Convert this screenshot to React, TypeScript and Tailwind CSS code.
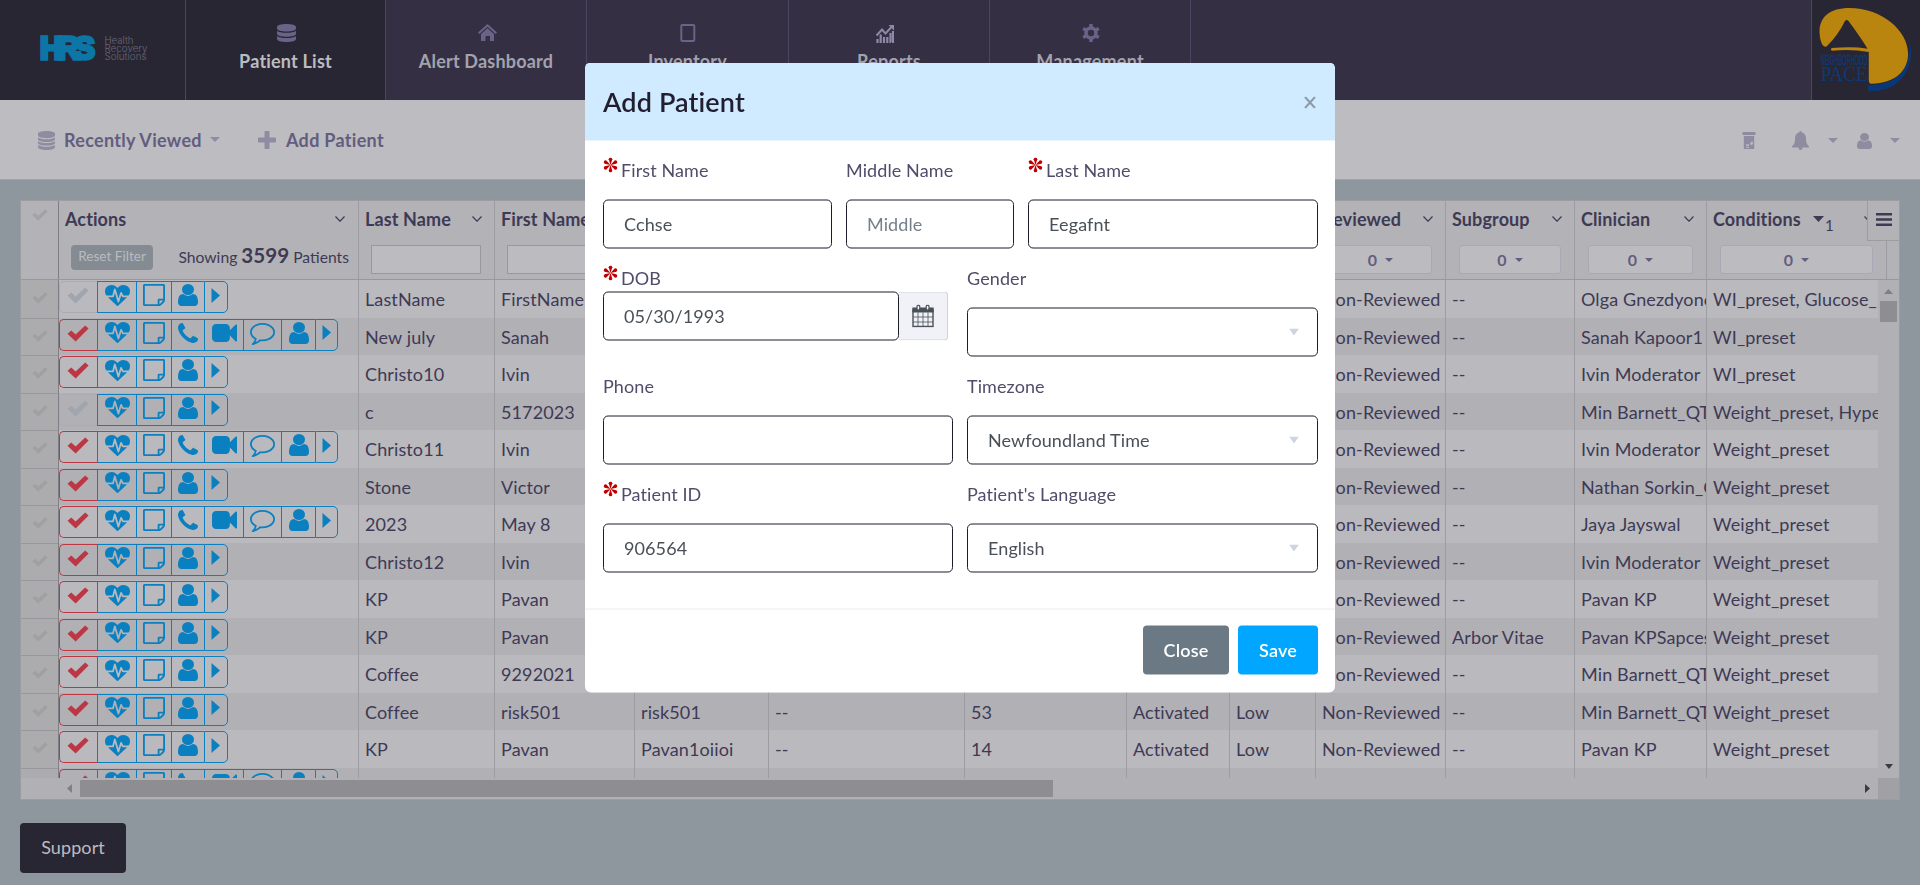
import type { ReactNode } from "react";

const P = {
  heart:
    "M1280 896h305q-5 6-10 10.5t-9 7.5l-3 4-623 600q-18 18-44 18t-44-18l-624-602q-5-2-21-20h369q22 0 39.5-13.5t22.5-34.5l70-281 190 667q6 20 23 33t39 13q21 0 38-13t23-33l146-485 56 112q18 35 57 35zm512-428q0 145-103 300h-369l-111-221q-8-17-25.5-27t-36.5-8q-45 5-56 46l-129 430-196-686q-6-20-23.5-33t-39.5-13-39 13.5-22 34.5l-116 464h-423q-103-155-103-300 0-220 127-344t351-124q62 0 126.5 21.5t120 58 95.5 68.5 76 68q36-36 76-68t95.5-68.5 120-58 126.5-21.5q224 0 351 124t127 344z",
  note: "M1528 1280h-248v248q29-10 41-22l185-185q12-12 22-41zm-280-128h288v-896h-1280v1280h896v-288q0-40 28-68t68-28zm416-928v1024q0 40-20 88t-48 76l-184 184q-28 28-76 48t-88 20h-1024q-40 0-68-28t-28-68v-1344q0-40 28-68t68-28h1344q40 0 68 28t28 68z",
  phone:
    "M1600 1240q0 27-10 70.5t-21 68.5q-21 50-122 106-94 51-186 51-27 0-53-3.5t-57.5-12.5-47-14.5-55.5-20.5-49-18q-98-35-175-83-127-79-264-216t-216-264q-48-77-83-175-3-9-18-49t-20.5-55.5-14.5-47-12.5-57.5-3.5-53q0-92 51-186 56-101 106-122 25-11 68.5-21t70.5-10q14 0 21 3 18 6 53 76 11 19 30 54t35 63.5 31 53.5q3 4 17.5 25t21.5 35.5 7 28.5q0 20-28.5 50t-62 55-62 53-28.5 46q0 9 5 22.5t8.5 20.5 14 24 11.5 19q76 137 174 235t235 174q2 1 19 11.5t24 14 20.5 8.5 22.5 5q18 0 46-28.5t53-62 55-62 50-28.5q14 0 28.5 7t35.5 21.5 25 17.5q25 15 53.5 31t63.5 35 54 30q70 35 76 53 3 7 3 21z",
  video:
    "M1792 352v1088q0 42-39 59-13 5-25 5-27 0-45-19l-403-403v166q0 119-84.5 203.5t-203.5 84.5h-704q-119 0-203.5-84.5t-84.5-203.5v-704q0-119 84.5-203.5t203.5-84.5h704q119 0 203.5 84.5t84.5 203.5v165l403-402q18-19 45-19 12 0 25 5 39 17 39 59z",
  comment:
    "M896 384q-204 0-381.5 69.5t-282 187.5-104.5 255q0 112 71.5 213.5t201.5 175.5l87 50-27 96q-24 91-70 172 152-63 275-171l43-38 57 6q69 8 130 8 204 0 381.5-69.5t282-187.5 104.5-255-104.5-255-282-187.5-381.5-69.5zm896 512q0 174-120 321.5t-326 233-450 85.5q-70 0-145-8-198 175-460 242-49 14-114 22h-5q-15 0-27-10.5t-16-27.5v-1q-3-4-.5-12t2-10 4.5-9.5l6-9 7-8.5 8-9q7-8 31-34.5t34.5-38 31-39.5 32.5-51 27-59 26-76q-157-89-247.5-220t-90.5-281q0-174 120-321.5t326-233 450-85.5 450 85.5 326 233 120 321.5z",
  user: "M1536 1399q0 109-62.5 187t-150.5 78h-854q-88 0-150.5-78t-62.5-187q0-85 8.5-160.5t31.5-152 58.5-131 94-89 134.5-34.5q131 128 313 128t313-128q76 0 134.5 34.5t94 89 58.5 131 31.5 152 8.5 160.5zm-256-887q0 159-112.5 271.5t-271.5 112.5-271.5-112.5-112.5-271.5 112.5-271.5 271.5-112.5 271.5 112.5 112.5 271.5z",
};

function Glyph({ d, box, className }: { d: string; box: string; className: string }) {
  return (
    <svg viewBox={box} preserveAspectRatio="none" fill="currentColor" className={`shrink-0 ${className}`}>
      <path d={d} />
    </svg>
  );
}

function Check({ className }: { className: string }) {
  return <Glyph className={className} box="0 0 22 17" d="M18.2.4l3.4 3.2L8.6 16.6.5 8.8l3.8-3.4 4.3 4.2z" />;
}

function Caret({ className = "w-[10px] h-[5px]" }: { className?: string }) {
  return <Glyph className={className} box="0 0 10 5" d="M0 0h10l-5 5z" />;
}

function Chevron() {
  return (
    <svg viewBox="0 0 10 6" fill="none" stroke="currentColor" strokeWidth="1.2" className="h-[6px] w-[10px] shrink-0">
      <path d="M.5.5L5 5.2 9.500.5" />
    </svg>
  );
}

function Database({ layers, className }: { layers: 3 | 4; className: string }) {
  return layers === 3 ? (
    <Glyph
      className={className}
      box="0 0 19 18"
      d="M9.500 0C15 0 19 1.300 19 3v1.500C19 6.200 15 7.500 9.500 7.500S0 6.200 0 4.500V3C0 1.300 4 0 9.500 0zM0 6.700c1.600 1.400 5 2.100 9.500 2.100s7.900-.7 9.500-2.100v3c0 1.700-4 3-9.500 3S0 11.400 0 9.700zM0 12c1.600 1.400 5 2.100 9.500 2.100S17.400 13.400 19 12v3c0 1.700-4 3-9.500 3S0 16.700 0 15z"
    />
  ) : (
    <Glyph
      className={className}
      box="0 0 17 19"
      d="M8.500 0C13.500 0 17 1.200 17 2.600v2C17 6 13.500 7.200 8.500 7.200S0 6 0 4.600v-2C0 1.200 3.500 0 8.500 0zM0 6.500c1.500 1.200 4.500 1.800 8.500 1.800s7-.6 8.500-1.800v1.700c0 1.500-3.500 2.700-8.500 2.700S0 9.700 0 8.200zM0 10.200C1.500 11.400 4.500 12 8.500 12s7-.6 8.500-1.800v1.700c0 1.500-3.500 2.700-8.500 2.700S0 13.400 0 11.900zM0 14c1.500 1.200 4.500 1.800 8.500 1.800s7-.6 8.500-1.800v2c0 1.700-3.500 3-8.500 3S0 17.700 0 16z"
    />
  );
}

function NavItem({ label, icon, className }: { label: string; icon: ReactNode; className: string }) {
  return (
    <div className={`flex h-full flex-col items-center border-r border-[#4a4560] pt-[23px] ${className}`}>
      <div className="flex h-[19px] items-center text-[#6a6387]">{icon}</div>
      <div className="mt-[6px] text-[18px] leading-[27px] font-bold tracking-[0.2px]">{label}</div>
    </div>
  );
}

function Header() {
  return (
    <header className="flex h-[100px] bg-[#342f43] text-[#a2a3ae]">
      <div className="flex h-full w-[186px] items-center border-r border-[#4a4560] bg-[#292634] pl-[39px]">
        <svg viewBox="0 0 112 40" className="mt-[-4px] h-[40px] w-[112px]">
          <g fontSize="31" fontWeight="700" fill="#0c76a6" stroke="#0c76a6" strokeWidth="3.400" className="font-['Liberation_Sans',sans-serif]">
            <text x="1" y="30.500" textLength="55" lengthAdjust="spacing">HRS</text>
          </g>
          <g fill="#6a6774" fontSize="10" className="font-['Inter',sans-serif] font-light">
            <text x="65.500" y="15.500" textLength="29" lengthAdjust="spacingAndGlyphs">Health</text>
            <text x="65.500" y="24" textLength="43" lengthAdjust="spacingAndGlyphs">Recovery</text>
            <text x="65.500" y="32" textLength="42" lengthAdjust="spacingAndGlyphs">Solutions</text>
          </g>
        </svg>
      </div>
      <NavItem label="Patient List" className="w-[200px] bg-[#292634] text-[#bcbcc0]" icon={<Database layers={3} className="ml-[2px] h-[18px] w-[19px]" />} />
      <NavItem
        label="Alert Dashboard"
        className="w-[201px]"
        icon={<Glyph className="ml-[2px] h-[17px] w-[19px]" box="0 0 19 17" d="M9.500 0L19 8.500l-1.400 1.400L9.500 2.800 1.400 9.900 0 8.500zM9.500 4.300L16 10v7h-4v-5H7.500v5H3v-7z" />}
      />
      <NavItem
        label="Inventory"
        className="w-[202px]"
        icon={<svg viewBox="0 0 16 18" className="h-[18px] w-[16px]" fill="none" stroke="currentColor" strokeWidth="2"><rect x="1.300" y="1" width="13" height="16" rx="1" /></svg>}
      />
      <NavItem
        label="Reports"
        className="w-[201px]"
        icon={
          <svg viewBox="0 0 18 18" className="mt-[2px] mr-[8px] h-[18px] w-[18px] text-[#8f89a8]" fill="none" stroke="currentColor" strokeWidth="2">
            <path d="M.5 10.500L6 4.500l3.500 4 6-6.500" />
            <path d="M12.500 0H18v5.500z" fill="currentColor" stroke="none" />
            <path d="M1.500 18v-4M4.700 18V9.500M8 18v-6M11.300 18v-6M14.500 18V8M17 18V6" strokeWidth="2.200" />
          </svg>
        }
      />
      <NavItem
        label="Management"
        className="w-[201px]"
        icon={
          <svg viewBox="0 0 18 18" className="ml-[2px] h-[18px] w-[18px]" fill="none" stroke="currentColor">
            <circle cx="9" cy="9" r="5" strokeWidth="3.600" />
            <path d="M9 0v3M9 15v3M1.200 4.500l2.600 1.500M14.200 12l2.600 1.500M1.200 13.500L3.800 12M14.200 6l2.600-1.500" strokeWidth="3.400" />
          </svg>
        }
      />
      <div className="ml-auto h-full w-[109px] border-l border-[#4a4560] bg-[#292634]">
        <svg viewBox="1296 0 272 300" preserveAspectRatio="none" className="h-[100px] w-[108px]">
          <path fill="#083878" d="M1544 130C1556 205 1515 279 1440 273Q1434 264 1438 255C1508 258 1544 210 1544 130z" />
          <path fill="#b9850f" d="M1331 140C1320 142 1315 112 1315 95C1315 50 1342 24 1390 24C1470 24 1538 90 1538 162C1538 212 1504 252 1444 251Q1439 250 1439 240L1439 156Q1395 146 1346 152Q1341 148 1346 144Q1400 139 1436 146Q1416 108 1388 63Q1383 57 1379 63Q1362 105 1334 138Z" />
          <text x="1318" y="196" textLength="118" lengthAdjust="spacingAndGlyphs" fontSize="43" fill="#0a3a77" stroke="#0a3a77" strokeWidth="1" className="font-['Liberation_Sans',sans-serif]">NEIGHBORHOOD</text>
          <text x="1318" y="244" textLength="118" lengthAdjust="spacingAndGlyphs" fontSize="60" fill="#0a3a77" className="font-['Liberation_Serif',serif]">PACE</text>
        </svg>
      </div>
    </header>
  );
}

function Toolbar() {
  return (
    <div className="flex h-[80px] items-center border-b border-[#a2a3a9] bg-[#bdbcc0] pr-[20px] pl-[38px] text-[18px] font-bold tracking-[0.3px] text-[#635d80]">
      <Database layers={4} className="mt-[2px] h-[19px] w-[17px] text-[#8f8ba0]" />
      <span className="mt-[2px] ml-[9px] w-[138px] whitespace-nowrap">Recently Viewed</span>
      <Caret className="ml-[8px] h-[5px] w-[10px] text-[#8f8ba0]" />
      <Glyph className="mt-[1px] ml-[38px] h-[18px] w-[18px] text-[#8f8ba0]" box="0 0 18 18" d="M6.500 1q0-1 1-1h3q1 0 1 1v5.500H17q1 0 1 1v3q0 1-1 1h-5.500V17q0 1-1 1h-3q-1 0-1-1v-5.500H1q-1 0-1-1v-3q0-1 1-1h5.500z" />
      <span className="mt-[2px] ml-[10px]">Add Patient</span>
      <div className="mt-[2px] ml-auto flex items-center text-[#8f8ba0]">
        <svg viewBox="0 0 14 18" className="h-[17px] w-[14px]" fill="currentColor">
          <rect x="0" y="0" width="14" height="3.200" rx="1" />
          <path fillRule="evenodd" d="M1.500 4.300h11V18h-11zM4 13v1.500h3V13zM4 15.500v1.200h3v-1.200zM8.500 11l2-1 1 1.500-1.500 2.500-1.500-1z" />
        </svg>
        <Glyph className="ml-[36px] h-[19px] w-[17px]" box="0 0 17 19" d="M8.500 0q1.200 0 1.300 1.500C13 2.200 14 5 14 8c0 4 1 5.500 3 7.500v1h-6.500Q10.500 19 8.500 19t-2-2.500H0v-1C2 13.500 3 12 3 8c0-3 1-5.800 4.200-6.500Q7.300 0 8.500 0z" />
        <Caret className="ml-[19px] h-[5px] w-[10px]" />
        <Glyph className="ml-[19px] h-[16px] w-[15px]" box="256 128 1280 1536" d={P.user} />
        <Caret className="ml-[18px] h-[5px] w-[10px]" />
      </div>
    </div>
  );
}

const plain = "border-l border-y border-[#0a80c0] h-[32px] flex justify-center items-center pb-[4px] text-[#0a80c0]";

function Actions({ active, full }: { active: boolean; full: boolean }) {
  return (
    <div className="flex pt-[1px]">
      <div
        className={`flex h-[32px] w-[38px] items-center justify-center rounded-l-[5px] border-y border-l pr-px pb-[3px] ${active ? "border-[#bd3644] text-[#bd3644]" : "border-[#a9acb3] text-[#a1a5ae]"}`}
      >
        <Check className="h-[17px] w-[22px]" />
      </div>
      <div className={`${plain} w-[39px]`}><Glyph className="h-[21px] w-[25px]" box="0 0 1792 1536" d={P.heart} /></div>
      <div className={`${plain} w-[35px]`}><Glyph className="h-[22px] w-[22px]" box="128 128 1536 1536" d={P.note} /></div>
      {full && (
        <>
          <div className={`${plain} w-[33px]`}><Glyph className="h-[20px] w-[20px]" box="192 128 1408 1408" d={P.phone} /></div>
          <div className={`${plain} w-[39px]`}><Glyph className="h-[18px] w-[25px]" box="0 256 1792 1280" d={P.video} /></div>
          <div className={`${plain} w-[38px]`}><Glyph className="mt-[2px] h-[22px] w-[25px]" box="0 256 1792 1536" d={P.comment} /></div>
        </>
      )}
      <div className={`${plain} ${full ? "w-[34px]" : "w-[33px]"}`}><Glyph className="h-[22px] w-[20px]" box="256 128 1280 1536" d={P.user} /></div>
      <div className={`${plain} ${full ? "w-[23px]" : "w-[24px]"} rounded-r-[5px] border-r pr-[1px]`}><Glyph className="h-[15px] w-[9px]" box="0 0 9 16" d="M.5 0L9 8 .5 16z" /></div>
    </div>
  );
}

type Row = { active: boolean; full: boolean; cells: string[] };

const row = (flags: string, ...cells: string[]): Row => ({ active: flags.includes("a"), full: flags.includes("f"), cells });

const ROWS: Row[] = [
  row("", "LastName", "FirstName", "", "", "", "", "", "Non-Reviewed", "--", "Olga Gnezdyonova", "WI_preset, Glucose_preset"),
  row("af", "New july", "Sanah", "", "", "", "", "", "Non-Reviewed", "--", "Sanah Kapoor1", "WI_preset"),
  row("a", "Christo10", "Ivin", "", "", "", "", "", "Non-Reviewed", "--", "Ivin Moderator", "WI_preset"),
  row("", "c", "5172023", "", "", "", "", "", "Non-Reviewed", "--", "Min Barnett_QT", "Weight_preset, Hypertension"),
  row("af", "Christo11", "Ivin", "", "", "", "", "", "Non-Reviewed", "--", "Ivin Moderator", "Weight_preset"),
  row("a", "Stone", "Victor", "", "", "", "", "", "Non-Reviewed", "--", "Nathan Sorkin_Clinician", "Weight_preset"),
  row("af", "2023", "May 8", "", "", "", "", "", "Non-Reviewed", "--", "Jaya Jayswal", "Weight_preset"),
  row("a", "Christo12", "Ivin", "", "", "", "", "", "Non-Reviewed", "--", "Ivin Moderator", "Weight_preset"),
  row("a", "KP", "Pavan", "", "", "", "", "", "Non-Reviewed", "--", "Pavan KP", "Weight_preset"),
  row("a", "KP", "Pavan", "", "", "", "", "", "Non-Reviewed", "Arbor Vitae", "Pavan KPSapces", "Weight_preset"),
  row("a", "Coffee", "9292021", "", "", "", "", "", "Non-Reviewed", "--", "Min Barnett_QT", "Weight_preset"),
  row("a", "Coffee", "risk501", "risk501", "--", "53", "Activated", "Low", "Non-Reviewed", "--", "Min Barnett_QT", "Weight_preset"),
  row("a", "KP", "Pavan", "Pavan1oiioi", "--", "14", "Activated", "Low", "Non-Reviewed", "--", "Pavan KP", "Weight_preset"),
  row("af", "", "", "", "", "", "", "", "", "", "", ""),
];

const COLS: { title: string; width: string; select?: boolean }[] = [
  { title: "Last Name", width: "w-[136px]" },
  { title: "First Name", width: "w-[140px]" },
  { title: "", width: "w-[134px]" },
  { title: "", width: "w-[196px]" },
  { title: "", width: "w-[162px]" },
  { title: "", width: "w-[103px]" },
  { title: "", width: "w-[86px]" },
  { title: "Reviewed", width: "w-[130px]", select: true },
  { title: "Subgroup", width: "w-[129px]", select: true },
  { title: "Clinician", width: "w-[132px]", select: true },
  { title: "Conditions", width: "w-[180px]", select: true },
];

function GridHeader() {
  return (
    <div className="relative flex h-[79px] border-b border-[#98979d] bg-[#b3b2b6]">
      <div className="w-[38px] border-r border-[#7f7e84] pt-[8px] pl-[11px] text-[#a3a3a7]">
        <Check className="h-[12px] w-[16px]" />
      </div>
      <div className="w-[300px] border-r border-[#9d9ca2] pr-[9px] pl-[6px]">
        <div className="flex h-[36px] items-center justify-between pr-[4px] text-[18px] font-bold tracking-[0.1px]">
          Actions
          <Chevron />
        </div>
        <div className="flex items-center justify-between pl-[6px]">
          <div className="mt-[7px] flex h-[25px] w-[82px] items-center justify-center rounded-[4px] bg-[#848b93] pb-px text-[13.6px] whitespace-nowrap text-[#b9bbc0]">Reset Filter</div>
          <div className="mt-[5px] text-[15.700px] leading-[26px] whitespace-nowrap">
            Showing <b className="text-[20.600px]">3599</b> Patients
          </div>
        </div>
      </div>
      {COLS.map((c, i) => (
        <div key={i} className={`${c.width} shrink-0 border-r border-[#9d9ca2]`}>
          <div className="flex h-[36px] items-center justify-between overflow-hidden pr-[12px] pl-[6px] text-[18px] font-bold tracking-[0.12px] whitespace-nowrap">
            <span className="flex items-center">
              {c.title}
              {c.title === "Conditions" && (
                <>
                  <Caret className="ml-[12px] h-[6px] w-[11px]" />
                  <span className="mt-[12px] ml-px text-[15px] leading-[18px] font-normal">1</span>
                </>
              )}
            </span>
            <Chevron />
          </div>
          {c.select ? (
            <div className="mx-[13px] mt-[8px] flex h-[29px] items-center justify-center rounded-[3px] border border-[#a8a9b4] bg-[#bcbbc0] text-[16px] font-bold text-[#635d80]">
              0<Caret className="ml-[8px] h-[4px] w-[8px]" />
            </div>
          ) : (
            <div className="mr-[13px] ml-[12px] mt-[8px] h-[29px] border border-[#98979d] bg-[#bcbbc0]" />
          )}
        </div>
      ))}
      <div className="absolute top-0 right-0 flex h-[40px] w-[32px] items-center justify-center border-b border-l border-[#9d9ca2] bg-[#b3b2b6]">
        <Glyph className="mb-[2px] h-[13px] w-[16px]" box="0 0 16 13" d="M0 0h16v2.600H0zM0 5.200h16v2.600H0zM0 10.400h16V13H0z" />
      </div>
    </div>
  );
}

function Grid() {
  return (
    <div className="ml-[20px] h-[600px] w-[1880px] border border-[#9c9ca2] bg-[#b1b0b5] text-[#3e3a55]">
      <GridHeader />
      <div className="flex h-[498px]">
        <div className="w-[38px] overflow-hidden border-r border-[#7f7e84] bg-[#acacaf] pt-px">
          {ROWS.map((_, i) => (
            <div key={i} className="flex h-[37.5px] justify-center border-b border-[#98979d] pt-[11px] text-[#a0a0a3]">
              <Check className="h-[12px] w-[16px]" />
            </div>
          ))}
        </div>
        <div className="w-[1819px] overflow-hidden">
          {ROWS.map((r, i) => (
            <div key={i} className={`flex h-[37.5px] ${i % 2 ? "bg-[#b1b0b5]" : "bg-[#bab9be]"}`}>
              <div className="w-[300px] shrink-0 border-r border-[#9d9ca2]">
                <Actions active={r.active} full={r.full} />
              </div>
              {r.cells.map((c, j) => (
                <div key={j} className={`${COLS[j].width} shrink-0 overflow-hidden border-r border-[#9d9ca2] pt-[6px] pl-[6px] text-[18px] leading-[27px] tracking-[0.12px] whitespace-nowrap`}>
                  {c}
                </div>
              ))}
            </div>
          ))}
        </div>
        <div className="flex w-[21px] flex-col items-center bg-[#b1b0b5] pt-[9px] pb-[9px]">
          <Glyph className="h-[5px] w-[9px] text-[#817f86]" box="0 0 10 5" d="M0 5h10L5 0z" />
          <div className="mt-[7px] h-[21px] w-[17px] bg-[#8e8d92]" />
          <Caret className="mt-auto h-[5px] w-[8px] text-[#3c3b42]" />
        </div>
      </div>
      <div className="flex h-[21px] items-center pl-[46px]">
        <Glyph className="h-[9px] w-[5px] text-[#817f86]" box="0 0 5 10" d="M5 0v10L0 5z" />
        <div className="ml-[8px] h-[17px] w-[973px] bg-[#8e8d92]" />
        <Glyph className="mr-[8px] ml-auto h-[9px] w-[5px] text-[#3c3b42]" box="0 0 5 10" d="M0 0v10l5-5z" />
        <div className="h-[21px] w-[21px] bg-[#a1a0a5]" />
      </div>
    </div>
  );
}

function Asterisk() {
  return (
    <svg viewBox="-7 -7 14 14" className="mt-[1px] mr-[3px] h-[15px] w-[15px]" fill="#c00000">
      {[0, 60, 120, 180, 240, 300].map((a) => (
        <path key={a} d="M0 0L-1.700-5.400Q-1.500-7 0-7T1.700-5.400z" transform={`rotate(${a})`} />
      ))}
    </svg>
  );
}

function Calendar() {
  return (
    <svg viewBox="0 0 22 23" className="h-[23px] w-[22px]" fill="none" stroke="#4a5057">
      <path d="M1 5v17h20V5" strokeWidth="1.400" />
      <path d="M.3 3h21.400v5H.3z" fill="#4a5057" stroke="none" />
      <path d="M6 8v14M11 8v14M16 8v14M1 12.500h20M1 17.500h20" strokeWidth=".8" />
      <rect x="5" y=".7" width="2.800" height="5" rx="1.400" fill="#f1f2f8" strokeWidth="1.200" />
      <rect x="14.200" y=".7" width="2.800" height="5" rx="1.400" fill="#f1f2f8" strokeWidth="1.200" />
    </svg>
  );
}

function Field({ label, required, value, placeholder, select, date, className }: {
  label: string; required?: boolean; value?: string; placeholder?: string; select?: boolean; date?: boolean; className: string;
}) {
  return (
    <div className={`h-[108px] ${className}`}>
      <div className="flex h-[27px] text-[18px] leading-[27px] tracking-[0.1px] text-[#524c6b]">
        {required && <Asterisk />}
        {label}
      </div>
      <div className={`flex ${date ? "" : "mt-[16px]"}`}>
        <div className={`flex h-[49px] grow items-center justify-between rounded-[5px] border border-[#1f1c2e] bg-white pb-px text-[18px] tracking-[0.1px] ${select ? "pr-[18px] pl-[20px]" : "px-[20px]"} ${placeholder ? "text-[#75808a]" : "text-[#495057]"}`}>
          {value ?? placeholder ?? ""}
          {select && <Caret className="mt-px ml-auto h-[7px] w-[10px] text-[#ced4e0]" />}
        </div>
        {date && (
          <div className="mr-[5px] flex h-[49px] w-[49px] items-center justify-center rounded-r-[4px] border border-l-0 border-[#d0d2da] bg-[#f1f2f8] pb-px">
            <Calendar />
          </div>
        )}
      </div>
    </div>
  );
}

function Modal() {
  return (
    <div className="absolute top-[62px] left-[585px] w-[750px] translate-y-[0.5px] overflow-hidden rounded-[6px] bg-white will-change-transform">
      <div className="flex h-[78px] items-center justify-between bg-[#d0ebff] pr-[19px] pl-[18px]">
        <h2 className="text-[27px] font-semibold tracking-[0.12px] text-[#211e2f]">Add Patient</h2>
        <svg viewBox="0 0 12 12" className="mt-[2px] h-[12px] w-[12px]" stroke="#8d9ba9" strokeWidth="2">
          <path d="M1 .5l10 11M11 .5l-10 11" />
        </svg>
      </div>
      <div className="flex flex-wrap gap-x-[14px] pt-[16px] pr-[17px] pb-[20px] pl-[18px]">
        <Field label="First Name" required value="Cchse" className="w-[229px]" />
        <Field label="Middle Name" placeholder="Middle" className="w-[168px]" />
        <Field label="Last Name" required value="Eegafnt" className="w-[290px]" />
        <Field label="DOB" required value="05/30/1993" date className="w-[350px]" />
        <Field label="Gender" select className="w-[351px]" />
        <Field label="Phone" className="w-[350px]" />
        <Field label="Timezone" select value="Newfoundland Time" className="w-[351px]" />
        <Field label="Patient ID" required value="906564" className="w-[350px]" />
        <Field label="Patient's Language" select value="English" className="w-[351px]" />
      </div>
      <div className="flex h-[84px] items-start justify-end gap-[9px] border-t border-[#ededf0] px-[17px] pt-[16px] text-[18px] font-semibold tracking-[0.2px] text-white">
        <div className="flex h-[49px] w-[86px] items-center justify-center rounded-[4px] bg-[#6a7984]">Close</div>
        <div className="flex h-[49px] w-[80px] items-center justify-center rounded-[4px] bg-[#00a6ff]">Save</div>
      </div>
    </div>
  );
}

export default function App() {
  return (
    <div className="relative h-[885px] w-[1920px] overflow-hidden bg-[#8f979e] font-['Lato',sans-serif]">
      <Header />
      <Toolbar />
      <main className="pt-[20px]">
        <Grid />
        <div className="mt-[23px] ml-[20px] flex h-[50px] w-[106px] items-center justify-center rounded-[4px] bg-[#292634] pb-px text-[18px] tracking-[0.1px] text-[#bcbcc0]">Support</div>
      </main>
      <Modal />
    </div>
  );
}
